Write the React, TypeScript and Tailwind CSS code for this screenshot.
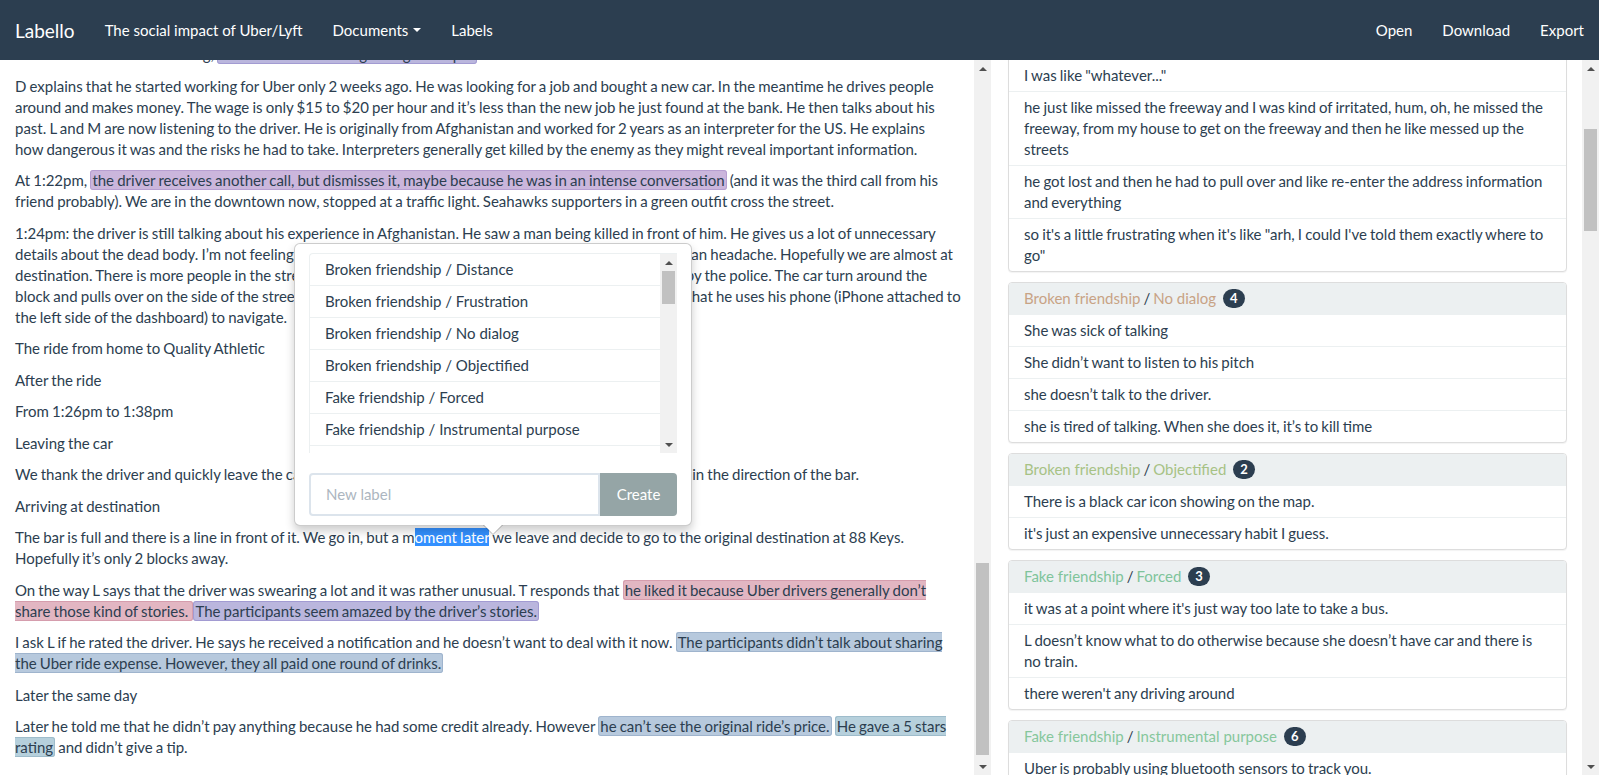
import React from "react";

type Tone = "purple" | "lavender" | "pink" | "blue" | "teal";

const tones: Record<Tone, string> = {
  purple: "bg-[#cbb6dc] border-[#b79fd1]",
  lavender: "bg-[#bab6dd] border-[#a29bd2]",
  pink: "bg-[#e2b6c2] border-[#d59dad]",
  blue: "bg-[#b7c9dd] border-[#9fb4cd]",
  teal: "bg-[#b6d0dc] border-[#9ebccb]",
};

function Mark({ tone, children }: { tone: Tone; children: React.ReactNode }) {
  return <span className={`rounded-[3px] border px-[1px] ${tones[tone]}`}>{children}</span>;
}

// classic windows-like scrollbar, thumb placement passed as full classes
function ScrollTrack({ thumb }: { thumb: string }) {
  return (
    <div className="flex w-[17px] shrink-0 flex-col bg-[#f1f1f1]">
      <div className="flex h-[17px] shrink-0 items-center justify-center">
        <span className="h-0 w-0 border-x-[4px] border-b-[4px] border-x-transparent border-b-[#505050]" />
      </div>
      <div className="min-h-0 flex-1">
        <div className={`mx-[2px] bg-[#c1c1c1] ${thumb}`} />
      </div>
      <div className="flex h-[17px] shrink-0 items-center justify-center">
        <span className="h-0 w-0 border-x-[4px] border-t-[4px] border-x-transparent border-t-[#505050]" />
      </div>
    </div>
  );
}

const labelOptions = [
  "Broken friendship / Distance",
  "Broken friendship / Frustration",
  "Broken friendship / No dialog",
  "Broken friendship / Objectified",
  "Fake friendship / Forced",
  "Fake friendship / Instrumental purpose",
  "Fake friendship / Transactional",
];

function LabelPopover() {
  return (
    <div className="absolute left-[294px] top-[183px] z-10 w-[398px] rounded-[6px] border border-black/20 bg-white px-[14px] py-[9px] shadow-[0_5px_10px_rgba(0,0,0,0.2)]">
      <div className="flex h-[200px] overflow-hidden rounded-tl-[4px] border-l border-t border-[#ecf0f1]">
        <div className="min-w-0 flex-1">
          {labelOptions.map((opt) => (
            <div key={opt} className="border-b border-[#ecf0f1] px-[15px] py-[5px]">
              {opt}
            </div>
          ))}
        </div>
        <ScrollTrack thumb="mt-0 h-[33px]" />
      </div>
      <div className="mt-[20px] flex h-[43px]">
        <input
          className="min-w-0 flex-1 rounded-l-[4px] border-2 border-[#dce4ec] px-[15px] text-[15px] text-[#2c3e50] outline-none placeholder:text-[#acb6c0]"
          placeholder="New label"
        />
        <button className="w-[77px] shrink-0 rounded-r-[4px] bg-[#95a5a6] text-[15px] text-white">Create</button>
      </div>
      {/* arrow */}
      <div className="absolute -bottom-[10px] left-1/2 -ml-[10px] h-0 w-0 border-x-[10px] border-t-[10px] border-x-transparent border-t-black/25" />
      <div className="absolute -bottom-[9px] left-1/2 -ml-[9px] h-0 w-0 border-x-[9px] border-t-[9px] border-x-transparent border-t-white" />
    </div>
  );
}

// line breaks follow the document as it is laid out in the editor
function DocumentText() {
  return (
    <div className="-mt-[16px] w-[974px] shrink-0 pl-[15px] pr-[5px] [word-spacing:-0.7px]">
      <p className="mb-[10.5px]">
        He asks where we are heading, <Mark tone="lavender">he seems to be looking for a good topic.</Mark>
      </p>
      <p className="mb-[10.5px]">
        D explains that he started working for Uber only 2 weeks ago. He was looking for a job and bought a new car. In the meantime he drives people
        <br />
        around and makes money. The wage is only $15 to $20 per hour and it’s less than the new job he just found at the bank. He then talks about his
        <br />
        past. L and M are now listening to the driver. He is originally from Afghanistan and worked for 2 years as an interpreter for the US. He explains
        <br />
        how dangerous it was and the risks he had to take. Interpreters generally get killed by the enemy as they might reveal important information.
      </p>
      <p className="mb-[10.5px]">
        At 1:22pm, <Mark tone="purple">the driver receives another call, but dismisses it, maybe because he was in an intense conversation</Mark> (and it was the third call from his
        <br />
        friend probably). We are in the downtown now, stopped at a traffic light. Seahawks supporters in a green outfit cross the street.
      </p>
      <p className="mb-[10.5px]">
        1:24pm: the driver is still talking about his experience in Afghanistan. He saw a man being killed in front of him. He gives us a lot of unnecessary
        <br />
        details about the dead body. I’m not feeling well anymore and all of these gory army stories are giving me an headache. Hopefully we are almost at
        <br />
        destination. There is more people in the streets tonight, and a few of those fans are all being questioned by the police. The car turn around the
        <br />
        block and pulls over on the side of the street. I do realize for the first time since the beginning of the ride that he uses his phone (iPhone attached to
        <br />
        the left side of the dashboard) to navigate.
      </p>
      <p className="mb-[10.5px]">The ride from home to Quality Athletic</p>
      <p className="mb-[10.5px]">After the ride</p>
      <p className="mb-[10.5px]">From 1:26pm to 1:38pm</p>
      <p className="mb-[10.5px]">Leaving the car</p>
      <p className="mb-[10.5px]">
        We thank the driver and quickly leave the car. It is very cold outside, and we walk together for two blocks in the direction of the bar.
      </p>
      <p className="mb-[10.5px]">Arriving at destination</p>
      <p className="mb-[10.5px]">
        The bar is full and there is a line in front of it. We go in, but a m
        <span className="bg-[#3390ff] text-white">oment later</span> we leave and decide to go to the original destination at 88 Keys.
        <br />
        Hopefully it’s only 2 blocks away.
      </p>
      <p className="mb-[10.5px]">
        On the way L says that the driver was swearing a lot and it was rather unusual. T responds that{" "}
        <Mark tone="pink">
          he liked it because Uber drivers generally don’t
          <br />
          share those kind of stories.{" "}
        </Mark>
        <Mark tone="lavender">The participants seem amazed by the driver’s stories.</Mark>
      </p>
      <p className="mb-[10.5px]">
        I ask L if he rated the driver. He says he received a notification and he doesn’t want to deal with it now.{" "}
        <Mark tone="blue">
          The participants didn’t talk about sharing
          <br />
          the Uber ride expense. However, they all paid one round of drinks.
        </Mark>
      </p>
      <p className="mb-[10.5px]">Later the same day</p>
      <p className="mb-[10.5px]">
        Later he told me that he didn’t pay anything because he had some credit already. However{" "}
        <Mark tone="blue">he can’t see the original ride’s price.</Mark>{" "}
        <Mark tone="teal">
          He gave a 5 stars
          <br />
          rating
        </Mark>{" "}
        and didn’t give a tip.
      </p>
    </div>
  );
}

type Card = {
  category: string;
  label: string;
  color: string;
  count: number;
  quotes: string[];
};

const cards: Card[] = [
  {
    category: "Broken friendship",
    label: "Frustration",
    color: "text-[#d39b7c]",
    count: 5,
    quotes: [
      "he was driving really slow and I was getting late",
      'I was like "whatever..."',
      "he just like missed the freeway and I was kind of irritated, hum, oh, he missed the freeway, from my house to get on the freeway and then he like messed up the streets",
      "he got lost and then he had to pull over and like re-enter the address information and everything",
      'so it\'s a little frustrating when it\'s like "arh, I could I\'ve told them exactly where to go"',
    ],
  },
  {
    category: "Broken friendship",
    label: "No dialog",
    color: "text-[#c8a385]",
    count: 4,
    quotes: [
      "She was sick of talking",
      "She didn’t want to listen to his pitch",
      "she doesn’t talk to the driver.",
      "she is tired of talking. When she does it, it’s to kill time",
    ],
  },
  {
    category: "Broken friendship",
    label: "Objectified",
    color: "text-[#a7c285]",
    count: 2,
    quotes: ["There is a black car icon showing on the map.", "it's just an expensive unnecessary habit I guess."],
  },
  {
    category: "Fake friendship",
    label: "Forced",
    color: "text-[#7fc49b]",
    count: 3,
    quotes: [
      "it was at a point where it's just way too late to take a bus.",
      "L doesn’t know what to do otherwise because she doesn’t have car and there is no train.",
      "there weren't any driving around",
    ],
  },
  {
    category: "Fake friendship",
    label: "Instrumental purpose",
    color: "text-[#86c79c]",
    count: 6,
    quotes: [
      "Uber is probably using bluetooth sensors to track you.",
      "He asks if we want water or candies.",
      "he is nice because he wants a good rating",
    ],
  },
];

function LabelCard({ card }: { card: Card }) {
  return (
    <div className="mb-[10px] overflow-hidden rounded-[4px] border border-[#dddddd] bg-white shadow-[0_1px_1px_rgba(0,0,0,0.05)]">
      <div className="flex items-center bg-[#ecf0f1] px-[15px] py-[5px]">
        <span className={card.color}>{card.category}</span>
        <span className="px-[3px]">/</span>
        <span className={card.color}>{card.label}</span>
        <span className="ml-[7px] rounded-[10px] bg-[#2c3e50] px-[7px] py-[3px] text-[13px] font-bold leading-[13px] text-white">
          {card.count}
        </span>
      </div>
      {card.quotes.map((q) => (
        <div key={q} className="border-t border-[#ecf0f1] px-[15px] py-[5px] [word-spacing:-0.7px]">
          {q}
        </div>
      ))}
    </div>
  );
}

export default function App() {
  return (
    <div className="flex h-screen flex-col overflow-hidden bg-white font-[Lato,sans-serif] text-[15px] leading-[21px] text-[#2c3e50]">
      <nav className="flex h-[60px] shrink-0 items-center justify-between bg-[#2c3e50] px-[15px] text-white">
        <div className="flex items-center">
          <span className="-ml-[15px] px-[15px] text-[19px]">Labello</span>
          <span className="px-[15px]">The social impact of Uber/Lyft</span>
          <span className="flex items-center px-[15px]">
            Documents
            <span className="ml-[5px] h-0 w-0 border-x-[4px] border-t-[4px] border-x-transparent border-t-white" />
          </span>
          <span className="px-[15px]">Labels</span>
        </div>
        <div className="-mr-[15px] flex items-center">
          <span className="px-[15px]">Open</span>
          <span className="px-[15px]">Download</span>
          <span className="px-[15px]">Export</span>
        </div>
      </nav>

      <div className="flex min-h-0 flex-1">
        <div className="relative flex w-[991px] shrink-0 overflow-hidden">
          <DocumentText />
          <ScrollTrack thumb="mt-[486px] h-[192px]" />
          <LabelPopover />
        </div>

        <div className="flex min-w-0 flex-1 overflow-hidden">
          <div className="min-w-0 flex-1 pl-[17px] pr-[15px]">
            <div className="-mt-[65px]">
              {cards.map((c) => (
                <LabelCard key={c.label} card={c} />
              ))}
            </div>
          </div>
          <ScrollTrack thumb="mt-[52px] h-[102px]" />
        </div>
      </div>
    </div>
  );
}
